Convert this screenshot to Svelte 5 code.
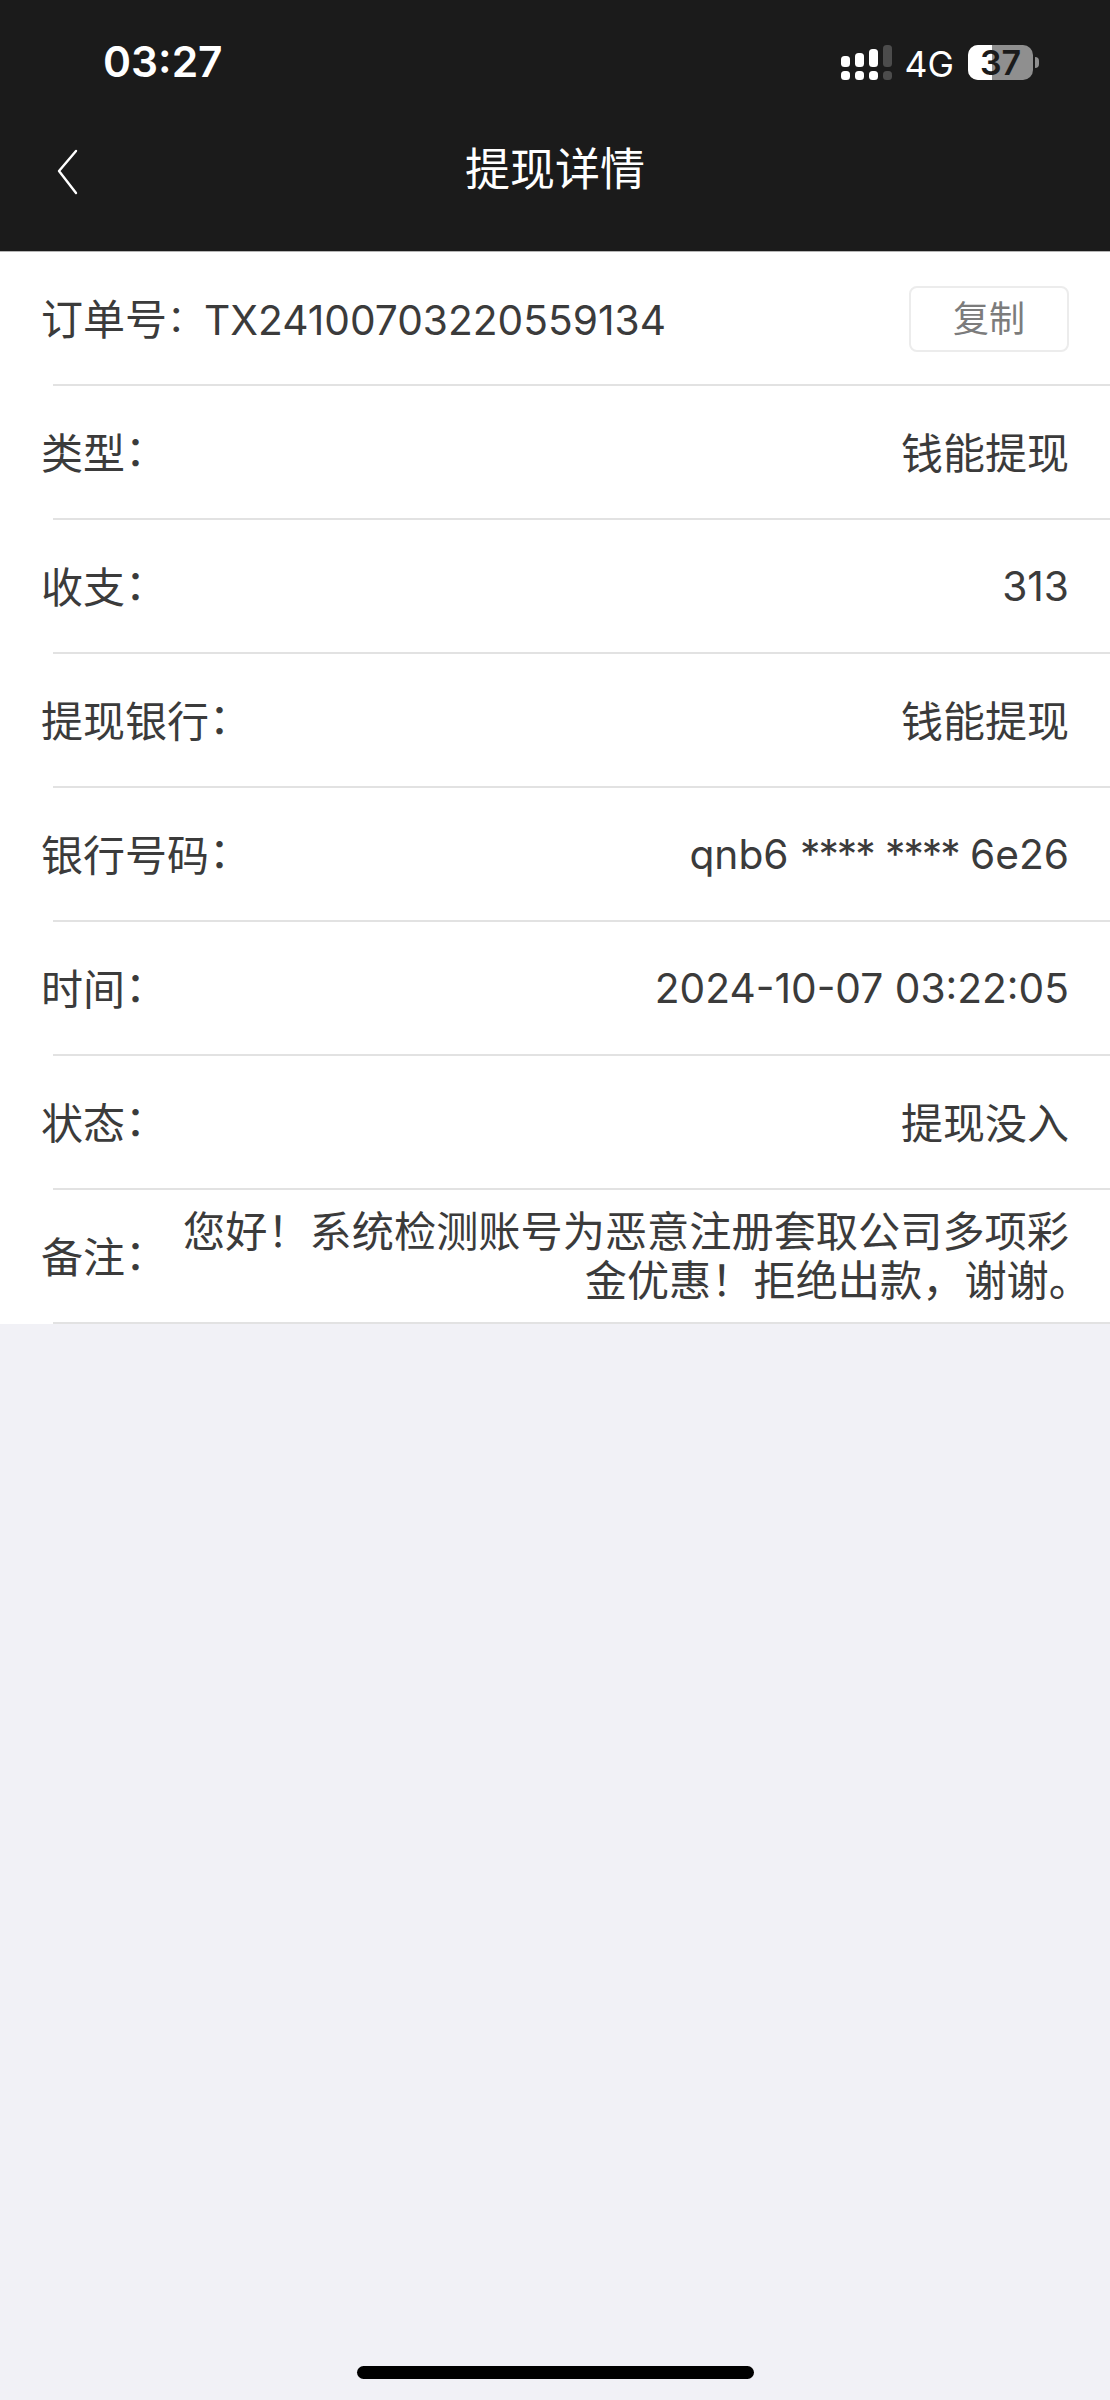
<script lang="ts">
  const rows = [
    { label: '类型', value: '钱能提现' },
    { label: '收支', value: '313', latin: true },
    { label: '提现银行', value: '钱能提现' },
    { label: '银行号码', parts: ['qnb6', '6e26'], latin: true },
    { label: '时间', value: '2024-10-07 03:22:05', latin: true },
    { label: '状态', value: '提现没入' }
  ];
</script>

<div class="page">
  <header>
    <div class="status">
      <span class="clock">03:27</span>
      <div class="indicators">
        <svg class="signal" width="51" height="36" viewBox="0 0 51 36">
          <rect x="0" y="11" width="9" height="11" rx="3.5" fill="#fff" />
          <rect x="14" y="8" width="9" height="14" rx="3.5" fill="#fff" />
          <rect x="28" y="4" width="9" height="18" rx="3.5" fill="#fff" />
          <rect x="42" y="0" width="9" height="22" rx="3.5" fill="#4c4c4c" />
          <rect x="0" y="26" width="9" height="9" rx="3.5" fill="#fff" />
          <rect x="14" y="26" width="9" height="9" rx="3.5" fill="#fff" />
          <rect x="28" y="26" width="9" height="9" rx="3.5" fill="#fff" />
          <rect x="42" y="26" width="9" height="9" rx="3.5" fill="#4c4c4c" />
        </svg>
        <span class="net">4G</span>
        <span class="battery"><span class="level"></span><b>37</b></span>
        <span class="cap"></span>
      </div>
    </div>
    <div class="nav">
      <svg class="back" width="24" height="46" viewBox="0 0 24 46">
        <path d="M20 2 L3 22 L20 44" fill="none" stroke="#fff" stroke-width="2.4" stroke-linecap="round" stroke-linejoin="round" />
      </svg>
      <h1>提现详情</h1>
    </div>
  </header>

  <section class="list">
    <div class="row">
      <span class="order">订单号<i class="colon">&#xFF1A;</i><em class="latin">TX24100703220559134</em></span>
      <button>复制</button>
    </div>
    {#each rows as row}
      <div class="row">
        <span>{row.label}<i class="colon">&#xFF1A;</i></span>
        {#if row.parts}
          <span class="latin">{row.parts[0]} <i class="mask">****</i> <i class="mask">****</i> {row.parts[1]}</span>
        {:else}
          <span class:latin={row.latin}>{row.value}</span>
        {/if}
      </div>
    {/each}
    <div class="row note">
      <span class="note-label">备注<i class="colon">&#xFF1A;</i></span>
      <p>您好&#xFF01;系统检测账号为恶意注册套取公司多项彩金优惠&#xFF01;拒绝出款&#xFF0C;谢谢<span class="stop">&#x3002;</span></p>
    </div>
  </section>

  <div class="home"></div>
</div>

<style>
  :global(body) {
    margin: 0;
    background: #f1f1f6;
  }

  .page {
    position: relative;
    height: 2400px;
    background: #f1f1f6;
    font-family: Inter, "Noto Sans CJK SC", sans-serif;
    overflow: hidden;
  }

  header {
    height: 252px;
    background: #1b1b1b;
    color: #fff;
    border-bottom: 1px solid #b5b5b5;
    box-sizing: border-box;
  }

  .status {
    height: 124px;
    display: flex;
    justify-content: space-between;
    padding: 36px 71px 0 103px;
    box-sizing: border-box;
  }

  .clock {
    font-size: 42.5px;
    font-weight: 600;
    line-height: 52px;
  }

  .indicators {
    display: flex;
    align-items: flex-start;
    padding-top: 9px;
  }

  .signal {
    margin-right: 13px;
  }

  .net {
    font-size: 35.5px;
    line-height: 42px;
    margin: -1px 14px 0 0;
  }

  .battery {
    position: relative;
    width: 65px;
    height: 35px;
    border-radius: 10px;
    background: #8f8f8f;
    text-align: center;
    color: #1b1b1b;
    font-size: 34px;
    line-height: 35px;
  }

  .level {
    position: absolute;
    left: 0;
    top: 0;
    bottom: 0;
    width: 24px;
    border-radius: 10px 0 0 10px;
    background: #fff;
  }

  .battery b {
    position: relative;
    font-weight: 600;
  }

  .cap {
    width: 4px;
    height: 11px;
    margin: 12px 0 0 2px;
    background: #8f8f8f;
    border-radius: 0 6px 6px 0;
  }

  .nav {
    position: relative;
    height: 126px;
  }

  .back {
    position: absolute;
    left: 56px;
    top: 25px;
  }

  h1 {
    margin: 0;
    padding-top: 20px;
    text-align: center;
    font-size: 45px;
    font-weight: 400;
    line-height: 52px;
  }

  .list {
    background: #fff;
    color: #3b3b3b;
    font-size: 42px;
  }

  .row {
    position: relative;
    height: 134px;
    padding: 0 41px 0 41px;
    display: flex;
    align-items: center;
    justify-content: space-between;
    box-sizing: border-box;
  }

  .row::after {
    content: "";
    position: absolute;
    left: 53px;
    right: 0;
    bottom: 0;
    height: 2px;
    background: #e2e2e2;
  }

  .row > span {
    padding-bottom: 6px;
  }

  .row > span.latin {
    padding-bottom: 2px;
  }

  .latin {
    font-size: 40.7px;
    font-style: normal;
  }

  .colon {
    font-style: normal;
    line-height: 0;
    vertical-align: 3px;
  }

  .order .colon {
    font-size: 37px;
  }

  .mask {
    font-style: normal;
    letter-spacing: -2px;
  }

  button {
    width: 160px;
    height: 66px;
    border: 2px solid #ececec;
    border-radius: 8px;
    background: #fff;
    color: #7c7c7c;
    font: inherit;
    font-size: 36px;
    padding: 0 0 6px;
  }

  .note p {
    margin: 0;
    flex: 1;
    text-align: right;
    font-size: 42.2px;
    line-height: 49px;
    padding-bottom: 2px;
  }

  /* closing stop hangs past the right edge so the line ends on its dot */
  .stop {
    margin-right: -22px;
  }

  .note-label {
    white-space: nowrap;
  }

  .home {
    position: absolute;
    left: 357px;
    top: 2366px;
    width: 397px;
    height: 13px;
    border-radius: 7px;
    background: #000;
  }
</style>
